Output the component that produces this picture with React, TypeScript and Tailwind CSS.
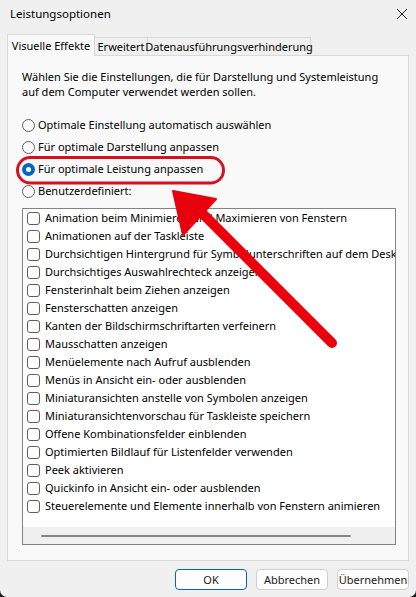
import React from "react";

/* Leistungsoptionen – Windows-Dialog "Visuelle Effekte" */

const radioOptions = [
  { label: "Optimale Einstellung automatisch auswählen", checked: false },
  { label: "Für optimale Darstellung anpassen", checked: false },
  { label: "Für optimale Leistung anpassen", checked: true },
  { label: "Benutzerdefiniert:", checked: false },
];

const effects = [
  "Animation beim Minimieren und Maximieren von Fenstern",
  "Animationen auf der Taskleiste",
  "Durchsichtigen Hintergrund für Symbolunterschriften auf dem Desktop",
  "Durchsichtiges Auswahlrechteck anzeigen",
  "Fensterinhalt beim Ziehen anzeigen",
  "Fensterschatten anzeigen",
  "Kanten der Bildschirmschriftarten verfeinern",
  "Mausschatten anzeigen",
  "Menüelemente nach Aufruf ausblenden",
  "Menüs in Ansicht ein- oder ausblenden",
  "Miniaturansichten anstelle von Symbolen anzeigen",
  "Miniaturansichtenvorschau für Taskleiste speichern",
  "Offene Kombinationsfelder einblenden",
  "Optimierten Bildlauf für Listenfelder verwenden",
  "Peek aktivieren",
  "Quickinfo in Ansicht ein- oder ausblenden",
  "Steuerelemente und Elemente innerhalb von Fenstern animieren",
];

function Radio({ checked }: { checked: boolean }) {
  if (checked) {
    return (
      <span className="flex h-[13px] w-[13px] shrink-0 items-center justify-center rounded-full bg-[#0067c0]">
        <span className="h-[5px] w-[5px] rounded-full bg-white" />
      </span>
    );
  }
  return (
    <span className="h-[13px] w-[13px] shrink-0 rounded-full border border-[#5f5f5f] bg-[#fbfbfb]" />
  );
}

function Button({ label, primary }: { label: string; primary?: boolean }) {
  return (
    <button
      className={
        primary
          ? "h-[21px] w-[72px] rounded-[4px] border border-[#0067c0] bg-[#fdfdfd] text-[11px] leading-none text-[#1a1a1a]"
          : "h-[21px] w-[72px] rounded-[4px] border border-[#d0d0d0] bg-[#fdfdfd] text-[11px] leading-none text-[#1a1a1a]"
      }
    >
      {label}
    </button>
  );
}

export default function App() {
  return (
    <div className="h-[597px] w-[416px] bg-[#1c1c1c]">
      <div
        className="relative flex h-[597px] w-[416px] flex-col overflow-hidden rounded-b-[7px] bg-[#f0f0f0] text-[11px] text-[#000000]"
        style={{ fontFamily: '"Noto Sans", "Liberation Sans", sans-serif' }}
      >
        {/* Titelleiste */}
        <div className="flex h-[34px] shrink-0 items-start justify-between pl-[10px] pr-[8px] pt-[5px]">
          <span className="text-[11.5px] leading-[18px]">Leistungsoptionen</span>
          <svg width="12" height="12" viewBox="0 0 12 12" className="mt-[3px]">
            <path d="M1 1 L11 11 M11 1 L1 11" stroke="#1a1a1a" strokeWidth="1" />
          </svg>
        </div>

        {/* Registerkarten */}
        <div className="flex h-[21px] shrink-0 items-end pl-[7px]">
          <div className="relative z-10 mb-[-1px] flex h-[22px] w-[88px] items-start justify-center whitespace-nowrap border border-b-0 border-[#d9d9d9] bg-[#f9f9f9] pt-[3px] leading-[16px]">
            Visuelle Effekte
          </div>
          <div className="flex h-[18px] w-[53px] items-center justify-center whitespace-nowrap border border-b-0 border-l-0 border-[#d9d9d9] bg-[#f0f0f0] leading-[16px]">
            Erweitert
          </div>
          <div className="flex h-[18px] w-[163px] items-center justify-center whitespace-nowrap border border-b-0 border-l-0 border-[#d9d9d9] bg-[#f0f0f0] leading-[16px]">
            Datenausführungsverhinderung
          </div>
        </div>

        {/* Inhalt */}
        <div className="mx-[7px] flex h-[506px] shrink-0 flex-col border border-[#d9d9d9] bg-[#f9f9f9] px-[14px] pt-[13px]">
          <p className="whitespace-nowrap leading-[15px]">
            Wählen Sie die Einstellungen, die für Darstellung und Systemleistung
            <br />
            auf dem Computer verwendet werden sollen.
          </p>

          <div className="mt-[15px] flex flex-col">
            {radioOptions.map((option) => (
              <div key={option.label} className="flex h-[22px] items-center gap-[3px]">
                <Radio checked={option.checked} />
                <span className="whitespace-nowrap leading-[16px]">{option.label}</span>
              </div>
            ))}
          </div>

          <div className="mt-[6px] flex h-[337px] w-[374px] flex-col border border-[#838383] bg-white">
            <div className="flex flex-1 flex-col overflow-hidden">
              {effects.map((effect) => (
                <div key={effect} className="flex h-[18px] shrink-0 items-center gap-[5px] pl-[4px]">
                  <span className="h-[13px] w-[13px] shrink-0 rounded-[3px] border border-[#5f5f5f] bg-white" />
                  <span className="whitespace-nowrap leading-[16px]">{effect}</span>
                </div>
              ))}
            </div>
            <div className="flex h-[17px] shrink-0 items-center bg-[#f0f0f0] pl-[18px]">
              <div className="h-[2px] w-[310px] rounded-full bg-[#868686]" />
            </div>
          </div>
        </div>

        {/* Schaltflächen */}
        <div className="mt-[8px] flex justify-end gap-[9px] pr-[7px]">
          <Button label="OK" primary />
          <Button label="Abbrechen" />
          <Button label="Übernehmen" />
        </div>

        {/* Markierung: Ellipse und Pfeil */}
        <svg
          className="pointer-events-none absolute left-0 top-0"
          width="416"
          height="597"
          viewBox="0 0 416 597"
        >
          <rect x="17.5" y="157.5" width="206" height="25.5" rx="12.7" fill="none" stroke="#d4111e" strokeWidth="3" />
          <line x1="200" y1="211" x2="332" y2="343" stroke="#e8000d" strokeWidth="10" strokeLinecap="round" />
          <polygon points="173,191 216,199 183,235" fill="#e8000d" stroke="#e8000d" strokeWidth="2" strokeLinejoin="round" />
        </svg>
      </div>
    </div>
  );
}
